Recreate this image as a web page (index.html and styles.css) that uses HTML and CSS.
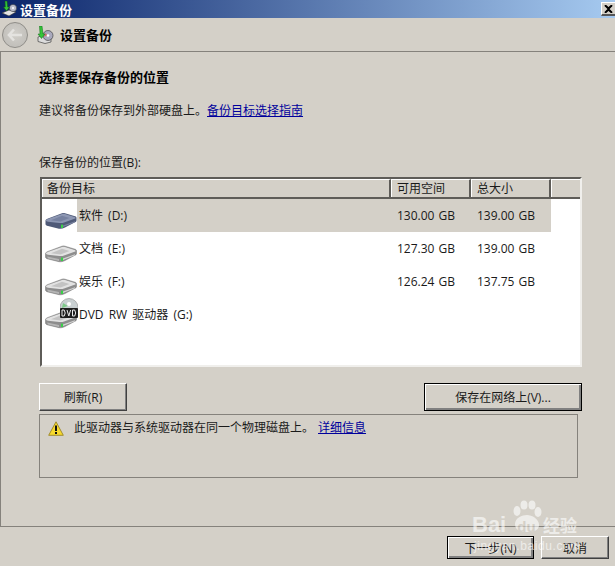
FILE: index.html
```html
<!DOCTYPE html>
<html lang="zh">
<head>
<meta charset="utf-8">
<title>设置备份</title>
<link rel="stylesheet" href="styles.css">
</head>
<body>
<svg class="defs" width="0" height="0" aria-hidden="true">
  <defs>
    <symbol id="hdd" viewBox="0 0 32 18">
      <path d="M.5 8.5C.5 7.8 1.5 7 3 6.4L17 1.2c1-.4 2-.4 3 0l10 3c1.300.4 1.500 1 1.500 1.800v2.500c0 .8-.5 1.300-1.500 1.700L20 15.500c-2 1-4 1.500-6 1.200L3 14c-1.500-.4-2.500-1-2.500-2z" fill="#8d8d8d" stroke="#777" stroke-width=".5"/>
      <path d="M1 8.500C1 7.800 2 7.300 3.500 6.800L17 2c1-.4 2-.4 3 0l9.500 3c1.500.5 1.500 1.300 0 1.800L19 10.500c-1.500.6-3 .7-4.500.4L3 9.800C2 9.600 1 9.200 1 8.500z" fill="#e2e2e2"/>
      <path d="M6 8.200l11-4.400 7.500 2.200-9 3.600z" fill="#c3c3c3"/>
      <path d="M2 11.500l12 2.400v2.200L3 13.600z" fill="#b5b5b5"/>
      <path d="M18 13.600l12-4.400v1L18 15z" fill="#d4d4d4"/>
      <rect x="16" y="12.600" width="2" height="3.400" fill="#39d048"/>
    </symbol>
    <symbol id="hdd-sel" viewBox="0 0 32 18">
      <path d="M.5 8.500C.5 7.800 1.500 7 3 6.400L17 1.200c1-.4 2-.4 3 0l10 3c1.300.4 1.500 1 1.500 1.800v2.500c0 .8-.5 1.300-1.500 1.700L20 15.500c-2 1-4 1.500-6 1.200L3 14c-1.500-.4-2.500-1-2.500-2z" fill="#4f5a78"/>
      <path d="M1 8.500C1 7.800 2 7.300 3.500 6.800L17 2c1-.4 2-.4 3 0l9.500 3c1.500.5 1.500 1.300 0 1.800L19 10.500c-1.500.6-3 .7-4.500.4L3 9.800C2 9.600 1 9.200 1 8.500z" fill="#8d97b3"/>
      <path d="M6 8.200l11-4.400 7.500 2.200-9 3.600z" fill="#7681a0"/>
      <path d="M18 13.600l12-4.400v1L18 15z" fill="#7a84a0"/>
      <rect x="16" y="12.600" width="2" height="3.400" fill="#39d048"/>
    </symbol>
  </defs>
</svg>
<div class="window">
  <header class="titlebar">
    <svg class="title-icon" width="16" height="16" viewBox="0 0 16 16">
      <path d="M0 12l7-3 7 2-7 4z" fill="#e4e4e4" stroke="#333" stroke-width=".6"/>
      <circle cx="11" cy="7" r="3.600" fill="#b9bccb" stroke="#333" stroke-width=".5"/>
      <circle cx="11" cy="7" r="1" fill="#fff"/>
      <path d="M5 0l.7 6h1.800L4.500 10 1.500 6h1.800L3 0z" fill="#35c43a" stroke="#0c5c10" stroke-width=".5"/>
    </svg>
    <span class="title-text">设置备份</span>
    <button class="close" type="button" aria-label="关闭">
      <svg width="9" height="8" viewBox="0 0 9 8"><path d="M1 0l3.500 3L8 0M1 8l3.500-3L8 8" fill="none" stroke="#000" stroke-width="1.500"/><path d="M1 .5l7 7M8 .5l-7 7" stroke="#000" stroke-width="1.500"/></svg>
    </button>
  </header>
  <div class="toolbar">
    <button class="back" type="button" aria-label="返回">
      <svg width="16" height="14" viewBox="0 0 16 14"><path d="M7 1.500L2 7l5 5.500M2.500 7H15" fill="none" stroke="#e4e3e0" stroke-width="2.600"/></svg>
    </button>
    <svg class="nav-icon" width="17" height="18" viewBox="0 0 17 18">
      <path d="M1 11l6-2 7 2v5l-6 1.500-7-2z" fill="#dcdcdc" stroke="#444" stroke-width=".7"/>
      <circle cx="11" cy="9.500" r="5" fill="#a9a9bd" stroke="#333" stroke-width=".6"/>
      <path d="M8 7l3 2.500-4 1z" fill="#d06a6a"/>
      <circle cx="11" cy="9.500" r="1.300" fill="#fff"/>
      <path d="M5 0l1 8h2l-3.500 4.500L1 8h2L2.500 0z" fill="#35c43a" stroke="#0f6d14" stroke-width=".5"/>
    </svg>
    <span class="nav-title">设置备份</span>
  </div>
  <main class="content">
    <h1 class="heading">选择要保存备份的位置</h1>
    <p class="intro">建议将备份保存到外部硬盘上。<a class="link" href="#">备份目标选择指南</a></p>
    <label class="list-label">保存备份的位置(B):</label>
    <div class="list">
      <div class="list-head">
        <div class="col col-name">备份目标</div>
        <div class="col">可用空间</div>
        <div class="col">总大小</div>
        <div class="col col-rest"></div>
      </div>
      <div class="row selected">
        <span class="cell-icon"><svg class="hdd" width="32" height="18"><use href="#hdd-sel"/></svg></span>
        <div class="cells">
          <span class="cell-name">软件 (D:)</span><span class="cell-free">130.00 GB</span><span class="cell-total">139.00 GB</span>
        </div>
      </div>
      <div class="row">
        <span class="cell-icon"><svg class="hdd" width="32" height="18"><use href="#hdd"/></svg></span>
        <div class="cells">
          <span class="cell-name">文档 (E:)</span><span class="cell-free">127.30 GB</span><span class="cell-total">139.00 GB</span>
        </div>
      </div>
      <div class="row">
        <span class="cell-icon"><svg class="hdd" width="32" height="18"><use href="#hdd"/></svg></span>
        <div class="cells">
          <span class="cell-name">娱乐 (F:)</span><span class="cell-free">126.24 GB</span><span class="cell-total">137.75 GB</span>
        </div>
      </div>
      <div class="row">
        <span class="cell-icon dvd">
          <svg class="hdd" width="32" height="18"><use href="#hdd"/></svg>
          <svg class="disc" width="18" height="22" viewBox="0 0 18 22">
            <circle cx="9" cy="9.500" r="9" fill="#c9d0d2" stroke="#8b8b8b" stroke-width=".6"/>
            <path d="M3 5l5 3-6 2z" fill="#7fc98a"/>
            <circle cx="9" cy="6" r="2" fill="#fff"/>
            <rect x="0" y="10" width="18" height="10" rx="1" fill="#1e1e1e"/>
            <path d="M2 12h2.200l1 3-1 3H2zM7 12l1.800 6 1.800-6M12.500 12h2.200l1 3-1 3h-2.200z" fill="none" stroke="#ececec" stroke-width="1"/>
          </svg>
        </span>
        <div class="cells">
          <span class="cell-name">DVD RW 驱动器 (G:)</span>
        </div>
      </div>
    </div>
    <div class="actions">
      <button class="btn btn-refresh" type="button">刷新(R)</button>
      <button class="btn btn-default btn-net" type="button">保存在网络上(V)...</button>
    </div>
    <div class="notice">
      <svg class="warn" width="16" height="15" viewBox="0 0 16 15"><path d="M8 .8L15.300 14.300H.7z" fill="#f7d92c" stroke="#a08c30" stroke-width="1" stroke-linejoin="round"/><rect x="7" y="4.500" width="2" height="5.500" fill="#111"/><rect x="7" y="11" width="2" height="2" fill="#111"/></svg>
      <span class="notice-text">此驱动器与系统驱动器在同一个物理磁盘上。</span>
      <a class="link" href="#">详细信息</a>
    </div>
  </main>
  <footer class="footer">
    <button class="btn btn-default btn-next" type="button">下一步(N)</button>
    <button class="btn btn-cancel" type="button">取消</button>
    <div class="watermark" aria-hidden="true">
      <svg class="wm-paw" width="34" height="34" viewBox="0 0 34 34" fill="#fff">
        <ellipse cx="8" cy="11" rx="3.500" ry="5"/>
        <ellipse cx="15" cy="5" rx="3.500" ry="4.500"/>
        <ellipse cx="23" cy="5" rx="3.500" ry="4.500"/>
        <ellipse cx="29" cy="12" rx="3.500" ry="5"/>
        <path d="M6 24c0-6 7-9 12-9s12 4 12 10c0 5-5 7-12 7S6 30 6 24z"/>
      </svg>
      <div class="wm-line"><span class="wm-logo">Bai</span><span class="wm-du">du</span><span class="wm-jy">经验</span></div>
      <div class="wm-url">jingyan.baidu.com</div>
    </div>
  </footer>
</div>
</body>
</html>
```

FILE: styles.css
```css
* { box-sizing: border-box; }
html, body { margin: 0; padding: 0; }
body {
  width: 615px;
  height: 566px;
  overflow: hidden;
  background: #d4d0c8;
  font-family: "Open Sans", "Noto Sans CJK SC", sans-serif;
  font-size: 12px;
  color: #1a1a1a;
}
.defs { position: absolute; }
.window { height: 566px; display: flex; flex-direction: column; }
.titlebar {
  height: 18px;
  flex: none;
  display: flex;
  align-items: center;
  padding-left: 2px;
  background: linear-gradient(90deg, #0a246a 0%, #a6caf0 100%);
  color: #fff;
  font-size: 13px;
  font-weight: 700;
}
.title-text { margin-left: 2px; }
.close {
  margin-left: auto;
  width: 14px;
  height: 14px;
  padding: 0;
  background: #d4d0c8;
  border: 0;
  border-top: 1px solid #fff;
  border-left: 1px solid #fff;
  border-bottom: 2px solid #555;
  display: flex;
  align-items: center;
  justify-content: center;
}
.toolbar {
  height: 34px;
  flex: none;
  display: flex;
  align-items: center;
  padding-left: 2px;
  border-bottom: 1px solid #85827c;
}
.back {
  width: 26px;
  height: 26px;
  padding: 0;
  border-radius: 50%;
  border: 1px solid #8f8d88;
  background: radial-gradient(circle at 50% 45%, #d2d0cb 0%, #c2c0bb 70%, #e2e1de 88%, #a9a7a2 100%);
  display: flex;
  align-items: center;
  justify-content: center;
}
.nav-icon { margin-left: 9px; }
.nav-title { margin-left: 6px; font-size: 13px; font-weight: 700; color: #000; }
.content {
  flex: 1;
  padding: 16px 0 0 38px;
  border-left: 1px solid #85827c;
  margin: 0;
  min-height: 0;
}
.heading { margin: 0; font-size: 13px; line-height: 18px; font-weight: 700; color: #000; }
.intro { margin: 16px 0 0; line-height: 18px; }
.link { color: #00009c; text-decoration: underline; }
.list-label { display: block; margin-top: 34px; line-height: 18px; }
.list {
  margin-top: 5px;
  margin-left: 1px;
  width: 542px;
  height: 190px;
  background: #fff;
  border: 2px solid;
  border-color: #5e5c58 #f0efec #f0efec #5e5c58;
  overflow: hidden;
}
.list-head {
  display: grid;
  grid-template-columns: 349px 80px 80px 1fr;
  height: 20px;
  background: #d4d0c8;
  border-bottom: 2px solid #5e5c58;
}
.col {
  padding-left: 5px;
  line-height: 17px;
  border-left: 1px solid #fff;
  border-right: 2px solid #5e5c58;
  border-top: 1px solid #fff;
}
.col-name { padding-left: 4px; }
.col-rest { border-right: 0; }
.row { height: 33px; display: flex; }
.cell-icon { position: relative; width: 35px; flex: none; padding: 13px 0 0 3px; }
.hdd { display: block; }
.disc { position: absolute; left: 18px; top: 0; }
.cells {
  width: 474px;
  height: 33px;
  display: grid;
  grid-template-columns: 314px 80px 80px;
  line-height: 34px;
}
.selected .cells { background: #d4d0c8; }
.cell-name { padding-left: 2px; white-space: nowrap; word-spacing: 2px; }
.cell-free, .cell-total { padding-left: 6px; white-space: nowrap; word-spacing: 1px; }
.actions { display: flex; justify-content: space-between; width: 543px; margin-top: 16px; }
.btn {
  height: 28px;
  padding: 0;
  background: #d4d0c8;
  font: inherit;
  color: #1a1a1a;
  border: 1px solid;
  border-color: #fff #404040 #404040 #fff;
  box-shadow: inset -1px -1px 0 #808080;
}
.btn-default { border: 1px solid #000; box-shadow: inset 1px 1px 0 #fff, inset -2px -2px 0 #808080; }
.btn-refresh { width: 88px; }
.btn-net { width: 158px; }
.notice {
  margin-top: 3px;
  width: 539px;
  height: 64px;
  border: 1px solid #85827c;
  padding: 6px 0 0 8px;
  display: flex;
  align-items: flex-start;
  line-height: 14px;
}
.warn { flex: none; }
.notice-text { margin-left: 10px; margin-right: 4px; }
.footer {
  position: relative;
  height: 40px;
  flex: none;
  border-top: 1px solid #85827c;
  padding: 9px 6px 0 0;
  display: flex;
  justify-content: flex-end;
  gap: 7px;
}
.footer .btn { height: 23px; }
.btn-next { width: 87px; }
.btn-cancel { width: 68px; }
.watermark {
  position: absolute;
  left: 472px;
  top: -27px;
  width: 110px;
  height: 54px;
  color: #fff;
  opacity: .6;
  white-space: nowrap;
  pointer-events: none;
}
.wm-paw { position: absolute; left: 37px; top: 0; }
.wm-line { position: relative; display: flex; align-items: baseline; padding-top: 14px; line-height: 22px; }
.wm-logo { font: 700 22px/22px "Liberation Sans", sans-serif; width: 38px; }
.wm-du { font: 700 15px/22px "Liberation Sans", sans-serif; color: #d4d0c8; width: 33px; text-align: center; }
.wm-jy { font-size: 17px; font-weight: 700; line-height: 22px; }
.wm-url { font: 12px/14px "Liberation Sans", sans-serif; letter-spacing: .6px; margin: 1px 0 0 2px; }
```
